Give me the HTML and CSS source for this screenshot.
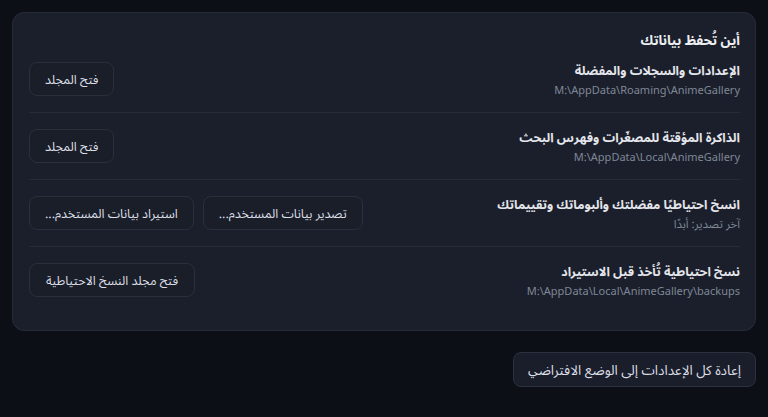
FILE: index.html
```html
<!DOCTYPE html>
<html lang="ar" dir="rtl">
<head>
<meta charset="utf-8">
<link rel="stylesheet" href="styles.css">
</head>
<body>
<main class="page">
  <section class="card">
    <h2 class="card-title">أين تُحفظ بياناتك</h2>
    <div class="row">
      <div class="info">
        <div class="label">الإعدادات والسجلات والمفضلة</div>
        <div class="sub path" dir="ltr">M:\AppData\Roaming\AnimeGallery</div>
      </div>
      <div class="actions"><button class="btn">فتح المجلد</button></div>
    </div>
    <div class="row">
      <div class="info">
        <div class="label">الذاكرة المؤقتة للمصغّرات وفهرس البحث</div>
        <div class="sub path" dir="ltr">M:\AppData\Local\AnimeGallery</div>
      </div>
      <div class="actions"><button class="btn">فتح المجلد</button></div>
    </div>
    <div class="row">
      <div class="info">
        <div class="label">انسخ احتياطيًا مفضلتك وألبوماتك وتقييماتك</div>
        <div class="sub">آخر تصدير: أبدًا</div>
      </div>
      <div class="actions">
        <button class="btn">تصدير بيانات المستخدم...</button>
        <button class="btn">استيراد بيانات المستخدم...</button>
      </div>
    </div>
    <div class="row">
      <div class="info">
        <div class="label">نسخ احتياطية تُأخذ قبل الاستيراد</div>
        <div class="sub path" dir="ltr">M:\AppData\Local\AnimeGallery\backups</div>
      </div>
      <div class="actions"><button class="btn btn-wide">فتح مجلد النسخ الاحتياطية</button></div>
    </div>
  </section>
  <div class="footer">
    <button class="btn btn-reset">إعادة كل الإعدادات إلى الوضع الافتراضي</button>
  </div>
</main>
</body>
</html>
```

FILE: styles.css
```css
* { box-sizing: border-box; }
html, body {
  margin: 0;
  padding: 0;
  background: #0c0f16;
  height: 100%;
}
body {
  font-family: "Segoe UI", "Noto Sans Arabic UI", "Noto Sans Arabic", "DejaVu Sans", "Noto Sans", sans-serif;
  color: #e6e8ed;
}
.page {
  padding: 12px;
}
.card {
  background: #1b1f2b;
  border: 1px solid #272c39;
  border-radius: 12px;
  padding: 17px 15px 17px 16px;
}
.card-title {
  margin: 0;
  font-size: 13.5px;
  font-weight: 700;
  line-height: 20px;
  color: #eceef2;
}
.row {
  display: flex;
  align-items: center;
  justify-content: space-between;
  padding: 14px 0;
  border-bottom: 1px solid #262b37;
}
.row:first-of-type { padding-top: 10px; }
.row:last-child { border-bottom: none; }
.info {
  display: flex;
  flex-direction: column;
  align-items: flex-start;
}
.label {
  font-size: 12.5px;
  font-weight: 700;
  line-height: 21px;
  color: #e4e6eb;
}
.sub {
  font-size: 11.5px;
  line-height: 16px;
  margin-top: 1px;
  color: #7f8796;
}
.path {
  font-size: 11px;
}
.actions {
  display: flex;
  gap: 9px;
}
.btn {
  font-family: inherit;
  font-size: 12.5px;
  color: #dcdfe6;
  background: #1a1e29;
  border: 1px solid #2a2f3c;
  border-radius: 8px;
  height: 34px;
  padding: 0 15px;
  cursor: pointer;
}
.btn-wide {
  padding: 0 16px;
}
.footer {
  display: flex;
  margin-top: 21px;
}
.btn-reset {
  height: 35px;
  font-size: 13.5px;
  padding: 0 14px;
  background: #1a1e2a;
  border-color: #2c3140;
}
```
